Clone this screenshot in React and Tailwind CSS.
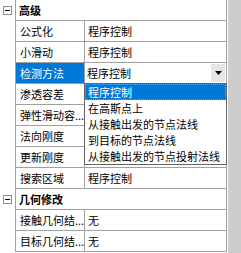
import React from "react";

const rows = [
  { cat: true, label: "高级" },
  { name: "公式化", value: "程序控制" },
  { name: "小滑动", value: "程序控制" },
  { name: "检测方法", value: "程序控制", selected: true },
  { name: "渗透容差", value: "" },
  { name: "弹性滑动容...", value: "" },
  { name: "法向刚度", value: "" },
  { name: "更新刚度", value: "" },
  { name: "搜索区域", value: "程序控制" },
  { cat: true, label: "几何修改" },
  { name: "接触几何结...", value: "无" },
  { name: "目标几何结...", value: "无" },
];

const options = [
  "程序控制",
  "在高斯点上",
  "从接触出发的节点法线",
  "到目标的节点法线",
  "从接触出发的节点投射法线",
];

const MinusBox = () => (
  <div className="w-[9px] h-[9px] border border-[#8c8c8c] bg-white flex items-center justify-center">
    <div className="w-[5px] h-px bg-black" />
  </div>
);

const App = () => {
  return (
    <div className="w-[241px] h-[253px] flex bg-white overflow-hidden font-['Noto_Sans_CJK_SC',sans-serif] text-[11px] text-black">
      <div className="relative w-[228px] flex flex-col">
        {rows.map((row, i) => (
          <div key={i} className="flex h-[21px]">
            {/* gutter */}
            <div className="w-[15px] h-[21px] flex items-center pl-[3px] pb-px">
              {row.cat && <MinusBox />}
            </div>
            <div className="w-[212px] h-[21px] flex border-x border-b border-[#a0a0a0]">
              {row.cat ? (
                <div className="flex-1 pl-[3px] leading-[20px] font-bold">{row.label}</div>
              ) : (
                <>
                  <div
                    className={
                      row.selected
                        ? "w-[68px] pl-[4px] leading-[20px] whitespace-nowrap overflow-hidden bg-[#0078d7] text-white"
                        : "w-[68px] pl-[4px] leading-[20px] whitespace-nowrap overflow-hidden"
                    }
                  >
                    {row.name}
                  </div>
                  <div className="flex-1 border-l border-[#a0a0a0] flex">
                    {row.selected ? (
                      <div className="flex-1 flex items-center justify-between pl-[2px] pr-px">
                        <span className="leading-[20px]">{row.value}</span>
                        <div className="w-[14px] h-[18px] bg-[#e5e5e5] flex items-center justify-center">
                          <svg width="7" height="4" viewBox="0 0 7 4">
                            <path d="M0 0h7L3.5 4z" fill="#000" />
                          </svg>
                        </div>
                      </div>
                    ) : (
                      <div className="pl-[3px] leading-[20px] whitespace-nowrap">{row.value}</div>
                    )}
                  </div>
                </>
              )}
            </div>
            <div className="w-px" />
          </div>
        ))}

        {/* dropdown list */}
        <div className="absolute left-[84px] top-[83px] w-[143px] border border-[#646464] bg-white flex flex-col">
          {options.map((opt, i) => (
            <div
              key={i}
              className={
                i === 0
                  ? "h-[16px] leading-[14px] pl-[2px] bg-[#0078d7] text-white border border-dotted border-[#e8891c] whitespace-nowrap"
                  : "h-[16px] leading-[16px] pl-[3px] whitespace-nowrap"
              }
            >
              {opt}
            </div>
          ))}
        </div>
      </div>
      <div className="w-[13px] bg-[#cdcdcd]" />
    </div>
  );
};

export default App;
